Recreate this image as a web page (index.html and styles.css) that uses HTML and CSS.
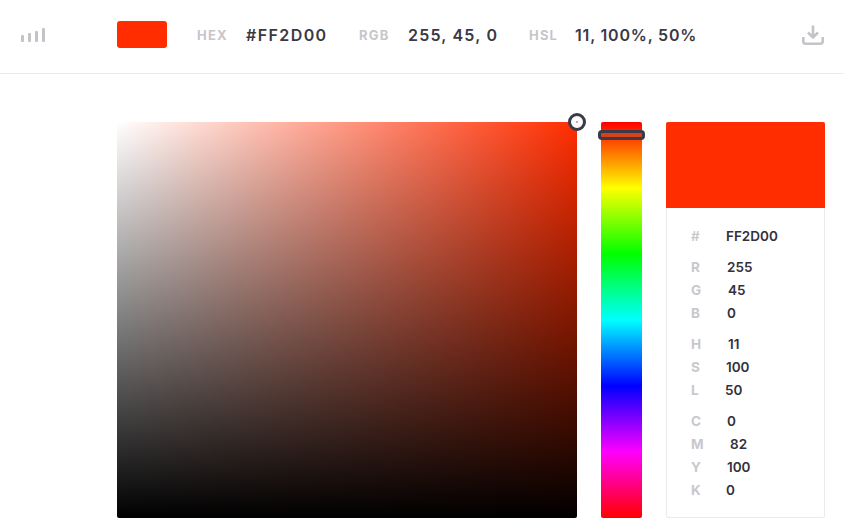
FILE: index.html
```html
<!DOCTYPE html>
<html lang="en">
<head>
    <meta charset="UTF-8">
    <meta name="viewport" content="width=device-width, initial-scale=1.0">
    <title>Color Picker</title>
    <link rel="stylesheet" href="styles.css">
</head>
<body>
    <header class="topbar">
        <svg class="bars-icon" width="24" height="14" viewBox="0 0 24 14">
            <rect x="0" y="7" width="3" height="7" rx="1"/>
            <rect x="7" y="5" width="3" height="9" rx="1"/>
            <rect x="14" y="3" width="3" height="11" rx="1"/>
            <rect x="21" y="0" width="3" height="14" rx="1"/>
        </svg>
        <div class="swatch"></div>
        <span class="tag tag-hex">HEX</span>
        <span class="value value-hex">#FF2D00</span>
        <span class="tag tag-rgb">RGB</span>
        <span class="value value-rgb">255, 45, 0</span>
        <span class="tag tag-hsl">HSL</span>
        <span class="value value-hsl">11, 100%, 50%</span>
        <svg class="download-icon" width="22" height="20" viewBox="0 0 22 20">
            <path d="M11 0.5v11M6 7.500l5 5 5-5" fill="none" stroke="#c4c4c8" stroke-width="2.6"/>
            <path d="M1.300 12v4.200c0 1.500.9 2.500 2.400 2.500h14.600c1.500 0 2.400-1 2.400-2.500V12" fill="none" stroke="#c4c4c8" stroke-width="2.6"/>
        </svg>
    </header>

    <main class="workspace">
        <div class="picker">
            <div class="picker-handle"><span></span></div>
        </div>
        <div class="hue">
            <div class="hue-handle"></div>
        </div>
        <aside class="panel">
            <div class="panel-color"></div>
            <div class="panel-values">
                <dl class="group">
                    <div class="row"><dt class="hash">#</dt><dd class="out-1">FF2D00</dd></div>
                </dl>
                <dl class="group">
                    <div class="row"><dt>R</dt><dd>255</dd></div>
                    <div class="row"><dt>G</dt><dd class="in-1">45</dd></div>
                    <div class="row"><dt>B</dt><dd>0</dd></div>
                </dl>
                <dl class="group">
                    <div class="row"><dt>H</dt><dd class="in-1">11</dd></div>
                    <div class="row"><dt>S</dt><dd class="out-1">100</dd></div>
                    <div class="row"><dt>L</dt><dd class="out-2">50</dd></div>
                </dl>
                <dl class="group">
                    <div class="row"><dt>C</dt><dd>0</dd></div>
                    <div class="row"><dt>M</dt><dd class="in-3">82</dd></div>
                    <div class="row"><dt>Y</dt><dd>100</dd></div>
                    <div class="row"><dt>K</dt><dd class="out-1">0</dd></div>
                </dl>
            </div>
        </aside>
    </main>
</body>
</html>
```

FILE: styles.css
```css
* {
    margin: 0;
    padding: 0;
    box-sizing: border-box;
}

body {
    width: 844px;
    height: 528px;
    overflow: hidden;
    background-color: #fff;
    font-family: Inter, "Open Sans", sans-serif;
    color: #3a3842;
}

.topbar {
    height: 74px;
    display: flex;
    align-items: center;
    border-bottom: 1px solid #ebebed;
    padding-left: 21px;
    padding-bottom: 4px;
}

.bars-icon {
    fill: #c4c4c8;
    margin-right: 72px;
}

.swatch {
    width: 50px;
    height: 27px;
    background-color: #ff2d00;
    border-radius: 3px;
    margin-right: 30px;
}

.tag {
    font-size: 13px;
    font-weight: 700;
    letter-spacing: 1.2px;
    color: #c6c6ca;
}

.value {
    font-size: 16px;
    font-weight: 600;
    color: #3a3842;
}

.tag-hex { width: 49px; }
.value-hex { width: 113px; letter-spacing: 1.4px; }
.tag-rgb { width: 49px; }
.value-rgb { width: 121px; letter-spacing: 1.2px; }
.tag-hsl { width: 46px; }
.value-hsl { width: 227px; letter-spacing: 0.8px; }

.workspace {
    display: flex;
    align-items: stretch;
    height: 396px;
    margin-top: 48px;
    padding-left: 117px;
}

.picker {
    position: relative;
    width: 460px;
    border-radius: 2px;
    background: linear-gradient(to top, #000, rgba(0, 0, 0, 0)), linear-gradient(to right, #fff, #ff2d00);
}

.picker-handle {
    position: absolute;
    top: -9px;
    right: -9px;
    width: 18px;
    height: 18px;
    border: 3px solid #3c3a47;
    border-radius: 50%;
    background-color: #fff;
    display: flex;
    align-items: center;
    justify-content: center;
}

.picker-handle span {
    width: 2px;
    height: 2px;
    border-radius: 50%;
    background-color: #f07a60;
}

.hue {
    position: relative;
    width: 41px;
    margin-left: 24px;
    border-radius: 2px;
    background: linear-gradient(to bottom, #f00, #ff0 16.66%, #0f0 33.33%, #0ff 50%, #00f 66.66%, #f0f 83.33%, #f00);
}

.hue-handle {
    position: absolute;
    top: 8px;
    left: -3px;
    width: 47px;
    height: 10px;
    border: 3px solid #3c3a47;
    border-radius: 4px;
    background-color: #d8401c;
}

.panel {
    width: 159px;
    margin-left: 24px;
    border: 1px solid #ebebed;
    border-radius: 2px;
    display: flex;
    flex-direction: column;
}

.panel-color {
    height: 86px;
    margin: -1px -1px 0;
    background-color: #ff2d00;
    border-radius: 2px 2px 0 0;
}

.panel-values {
    padding: 16px 0 0 24px;
    display: flex;
    flex-direction: column;
    gap: 8px;
}

.row {
    height: 23px;
    display: flex;
    align-items: center;
    font-size: 13.5px;
}

dt {
    width: 36px;
    font-weight: 700;
    color: #c8c8cc;
}

dt.hash {
    font-weight: 600;
}

dd {
    font-weight: 600;
    color: #33313a;
}

.in-1 { margin-left: 1px; }
.in-3 { margin-left: 3px; }
.out-1 { margin-left: -1px; }
.out-2 { margin-left: -2px; }
```
